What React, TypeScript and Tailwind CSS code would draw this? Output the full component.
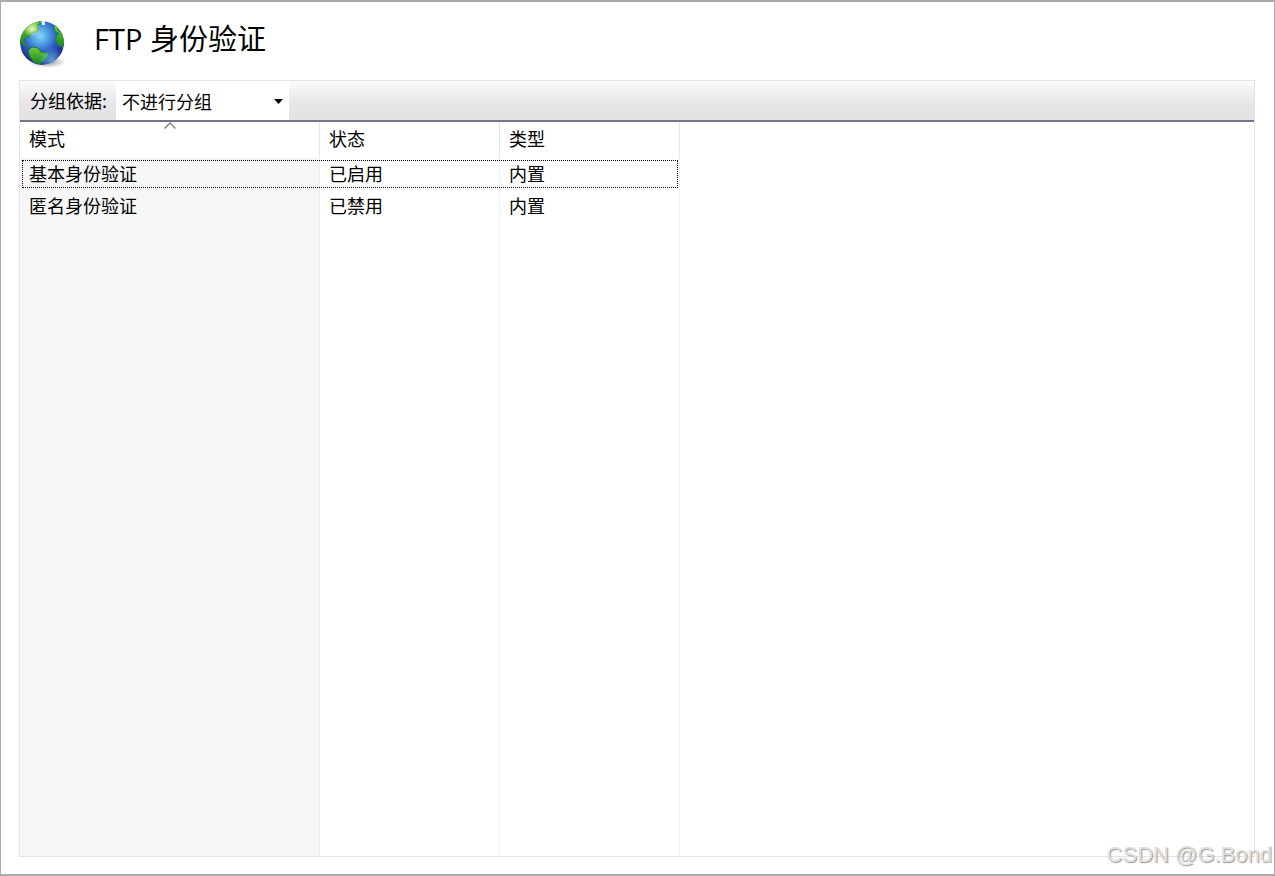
const rows = [
  { mode: "基本身份验证", status: "已启用", type: "内置" },
  { mode: "匿名身份验证", status: "已禁用", type: "内置" },
];

function GlobeIcon() {
  return (
    <svg className="h-12 w-12 shrink-0" viewBox="0 0 48 48" aria-hidden="true">
      <defs>
        <radialGradient id="sea" cx="0.46" cy="0.34" r="0.66">
          <stop offset="0" stopColor="#86d6f5" />
          <stop offset="0.3" stopColor="#4b9ce0" />
          <stop offset="0.62" stopColor="#2a52bc" />
          <stop offset="1" stopColor="#16247f" />
        </radialGradient>
        <linearGradient id="land" x1="0" y1="0" x2="0" y2="1">
          <stop offset="0" stopColor="#6fce3c" />
          <stop offset="1" stopColor="#14871f" />
        </linearGradient>
        <radialGradient id="glow" cx="0.72" cy="0.9" r="0.3">
          <stop offset="0" stopColor="#7fd0ff" stopOpacity="0.7" />
          <stop offset="1" stopColor="#7fd0ff" stopOpacity="0" />
        </radialGradient>
        <radialGradient id="shine">
          <stop offset="0" stopColor="#f4fcc8" stopOpacity="0.95" />
          <stop offset="1" stopColor="#f4fcc8" stopOpacity="0" />
        </radialGradient>
        <radialGradient id="shade">
          <stop offset="0" stopColor="#555" stopOpacity="0.65" />
          <stop offset="1" stopColor="#555" stopOpacity="0" />
        </radialGradient>
        <clipPath id="ball">
          <circle cx="22" cy="23" r="22" />
        </clipPath>
      </defs>
      <ellipse cx="27" cy="42" rx="19" ry="6" fill="url(#shade)" />
      <g clipPath="url(#ball)">
        <circle cx="22" cy="23" r="22" fill="url(#sea)" />
        <path
          d="M-1 22L0 12 9 0 19 0 20 4 17 5 19 9 16 12 12 13 9 17 6 17 3 20 5 24 8 26 5 26Z"
          fill="url(#land)"
          stroke="#238a35"
        />
        <ellipse cx="12" cy="9" rx="9" ry="8" fill="url(#shine)" />
        <path
          d="M8 31L12 27 18 28 21 32 28 33 28 36 24 41 19 44 14 42 10 37Z"
          fill="url(#land)"
          stroke="#1c7a3a"
        />
        <path
          d="M34 6L37 6 38 10 42 13 46 22 43 27 38 25 36 20 37 15 39 14 35 11Z"
          fill="url(#land)"
          stroke="#238a35"
        />
        <path d="M21 0L25 0 25 5 22 5Z" fill="#d9f1f2" />
        <circle cx="22" cy="23" r="22" fill="url(#glow)" />
      </g>
    </svg>
  );
}

export default function App() {
  return (
    <main className="relative flex min-h-screen flex-col border-x border-y-2 border-[#ababab] bg-white pr-[19px] pb-[17px] pl-[18px] font-['Noto_Sans_CJK_SC',sans-serif] text-lg text-black">
      <header className="flex h-[78px] items-center gap-[26px] pt-[6px] pl-px">
        <GlobeIcon />
        <h1 className="pb-[10px] font-['Open_Sans','Noto_Sans_CJK_SC',sans-serif] text-[29px] leading-10">
          FTP 身份验证
        </h1>
      </header>

      <section className="flex flex-1 flex-col border border-[#e3e3e3]">
        <div className="flex h-[41px] items-stretch border-b-2 border-[#77738f] bg-linear-to-b from-[#fcfcfc] via-[#e9e7e9] to-[#e3e1e3]">
          <label htmlFor="group" className="flex w-24 items-center pb-[2px] pl-[10px]">
            分组依据:
          </label>
          <div className="relative w-[173px]">
            <select
              id="group"
              defaultValue="none"
              className="h-full w-full appearance-none bg-white pl-[6px] outline-none"
            >
              <option value="none">不进行分组</option>
              <option value="status">状态</option>
              <option value="type">类型</option>
            </select>
            <svg
              className="pointer-events-none absolute top-[18px] right-[6px] h-[5px] w-[9px]"
              viewBox="0 0 9 5"
              aria-hidden="true"
            >
              <path d="M0 0H9L4.5 5Z" fill="#000" />
            </svg>
          </div>
        </div>

        <div className="flex flex-1 items-stretch">
          <table className="w-[660px] table-fixed border-separate border-spacing-0 text-left leading-6">
            <colgroup>
              <col className="w-[300px]" />
              <col className="w-[180px]" />
              <col className="w-[180px]" />
            </colgroup>
            <thead>
              <tr className="h-9">
                <th className="relative border-r border-[#e5e5e5] pt-0 pb-1 pl-[9px] font-normal">
                  模式
                  <svg
                    className="absolute top-0 left-1/2 h-[7px] w-3 -translate-x-1/2"
                    viewBox="0 0 12 7"
                    fill="none"
                    stroke="#858585"
                    strokeWidth="1.5"
                    aria-hidden="true"
                  >
                    <path d="M0.5 6.5L6 1L11.5 6.5" />
                  </svg>
                </th>
                <th className="border-r border-[#e5e5e5] pt-0 pb-1 pl-[9px] font-normal">状态</th>
                <th className="border-r border-[#e5e5e5] pt-0 pb-1 pl-[9px] font-normal">类型</th>
              </tr>
            </thead>
            <tbody>
              {rows.map((row, i) => (
                <tr
                  key={row.mode}
                  className={
                    i === 0
                      ? "h-8 outline-1 -outline-offset-3 outline-black outline-dotted"
                      : "h-8"
                  }
                >
                  <td className="border-r border-[#e8f0f7] bg-[#f6f6f6] pt-0 pb-[2px] pl-[9px]">{row.mode}</td>
                  <td className="border-r border-[#edf3f9] pt-0 pb-[2px] pl-[9px]">{row.status}</td>
                  <td className="border-r border-[#edf3f9] pt-0 pb-[2px] pl-[9px]">{row.type}</td>
                </tr>
              ))}
              {/* empty row carries the column lines down to the bottom */}
              <tr aria-hidden="true">
                <td className="border-r border-[#e8f0f7] bg-[#f6f6f6]" />
                <td className="border-r border-[#edf3f9]" />
                <td className="border-r border-[#edf3f9]" />
              </tr>
            </tbody>
          </table>
        </div>
      </section>

      <span className="absolute right-[2px] bottom-[5px] font-['Liberation_Sans',sans-serif] text-[22px] leading-7 text-[#e0e0e0] [text-shadow:1px_1px_1px_#999]">
        CSDN @G.Bond
      </span>
    </main>
  );
}
